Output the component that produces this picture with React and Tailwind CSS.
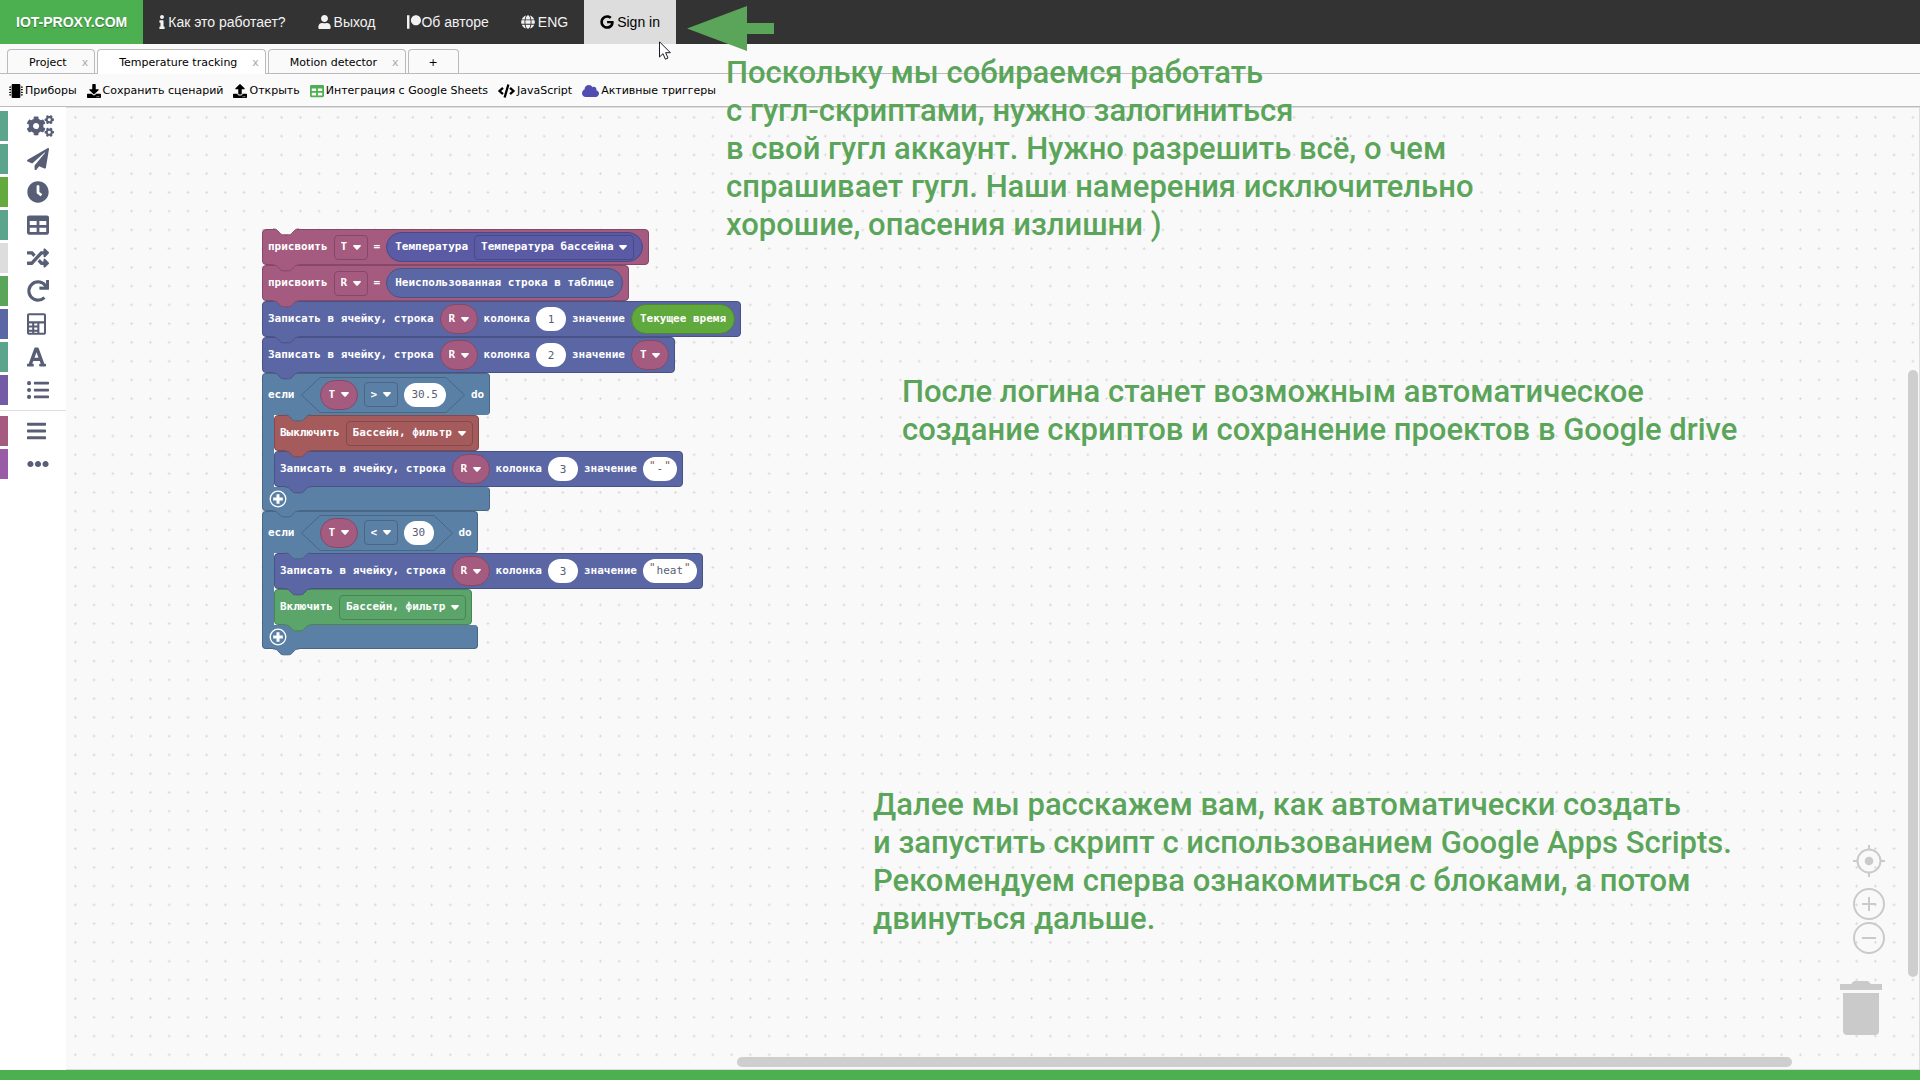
import React from "react";
import {
  FaInfo, FaUser, FaPatreon, FaGlobe, FaGoogle, FaMicrochip, FaDownload, FaUpload, FaTable, FaCode, FaCloud,
  FaCogs, FaPaperPlane, FaClock, FaRandom, FaRedo, FaFont, FaListUl, FaBars, FaEllipsisH,
} from "react-icons/fa";

/* ---------- Navigation ---------- */

function NavLink({ icon, children, active, tight }) {
  return (
    <a
      href="#"
      className={
        "flex items-center px-4 " +
        (tight ? "" : "gap-[3px] ") +
        (active ? "bg-[#dddddd] text-black" : "text-[#f2f2f2]")
      }
    >
      {icon}
      <span>{children}</span>
    </a>
  );
}

function TopNav() {
  return (
    <nav className="flex h-11 shrink-0 bg-[#333333] font-['Liberation_Sans',Arial,sans-serif] text-sm leading-4">
      <a href="#" className="flex items-center bg-[#4caf50] px-4 font-bold text-white [text-shadow:0_1px_1px_rgba(0,0,0,0.35)]">
        IOT-PROXY.COM
      </a>
      <NavLink icon={<FaInfo className="h-3.5 w-1.5" />}>Как это работает?</NavLink>
      <NavLink icon={<FaUser className="h-3.5 w-[13px]" />}>Выход</NavLink>
      <NavLink tight icon={<FaPatreon className="size-3.5" />}>Об авторе</NavLink>
      <NavLink icon={<FaGlobe className="size-3.5" />}>ENG</NavLink>
      <NavLink active icon={<FaGoogle className="h-3.5 w-3.5" />}>Sign in</NavLink>
    </nav>
  );
}

/* ---------- Project tabs ---------- */

function Tab({ children, active }) {
  return (
    <div
      className={
        "flex items-center gap-[15px] rounded-t border border-b-0 border-[#bbbbbb] pt-0.5 pr-1.5 pl-[21px] " +
        (active ? "-mb-px bg-white pb-px" : "bg-[#fafafa]")
      }
    >
      <button type="button">{children}</button>
      <button type="button" aria-label={"Close " + children} className="text-[#aaaaaa]">x</button>
    </div>
  );
}

function Tabs() {
  return (
    <div className="flex h-[30px] shrink-0 gap-0.5 border-b border-[#bbbbbb] bg-[#fafafa] pt-[5px] pl-[7px] text-[11px] leading-4">
      <Tab>Project</Tab>
      <Tab active>Temperature tracking</Tab>
      <Tab>Motion detector</Tab>
      <button type="button" aria-label="New tab" className="rounded-t border border-b-0 border-[#bbbbbb] px-5 pt-0.5">
        +
      </button>
    </div>
  );
}

/* ---------- Toolbar ---------- */

const TOOLS = [
  { label: "Приборы", icon: <FaMicrochip className="size-3.5" /> },
  { label: "Сохранить сценарий", icon: <FaDownload className="size-3.5" /> },
  { label: "Открыть", icon: <FaUpload className="size-3.5" /> },
  { label: "Интеграция с Google Sheets", icon: <FaTable className="size-3.5 text-[#4caf50]" /> },
  { label: "JavaScript", icon: <FaCode className="h-3.5 w-[17px]" /> },
  { label: "Активные триггеры", icon: <FaCloud className="h-3.5 w-[17px] text-[#504cb0]" /> },
];

function Toolbar() {
  return (
    <div className="flex h-[33px] shrink-0 items-center gap-2.5 border-b border-[#bbbbbb] bg-[#fafafa] pt-px pl-[9px] text-[11px] leading-4">
      {TOOLS.map((t) => (
        <button key={t.label} type="button" className="flex items-center gap-0.5 whitespace-nowrap text-black">
          {t.icon}
          {t.label}
        </button>
      ))}
    </div>
  );
}

/* ---------- Toolbox ---------- */

function CalculatorIcon() {
  return (
    <svg viewBox="0 0 448 512" className="h-[22px] w-[19px]" fill="currentColor" fillRule="evenodd" aria-hidden="true">
      <path d="M48 0h352c27 0 48 21 48 48v416c0 27-21 48-48 48H48c-27 0-48-21-48-48V48C0 21 21 0 48 0zM48 48v144h352V48zM48 242v50h74v-50zM170 242v50h74v-50zM292 242v222h108V242zM48 340v50h74v-50zM170 340v50h74v-50zM48 436v28h74v-28zM170 436v28h74v-28z" />
    </svg>
  );
}

const CATEGORIES = [
  { name: "Приборы", bar: "bg-[#5ba58c]", icon: <FaCogs className="h-[22px] w-[27px]" /> },
  { name: "Сообщения", bar: "bg-[#5ba58c]", icon: <FaPaperPlane className="size-[22px]" /> },
  { name: "Время", bar: "bg-[#63a93e]", icon: <FaClock className="size-[22px]" /> },
  { name: "Таблицы", bar: "bg-[#5ba58c]", icon: <FaTable className="size-[22px]" /> },
  { name: "Логика", bar: "bg-[#dddddd]", icon: <FaRandom className="size-[22px]" /> },
  { name: "Циклы", bar: "bg-[#5ba55b]", icon: <FaRedo className="size-[22px]" /> },
  { name: "Математика", bar: "bg-[#5b67a5]", icon: <CalculatorIcon /> },
  { name: "Текст", bar: "bg-[#5ba58c]", icon: <FaFont className="h-[22px] w-[19px]" /> },
  { name: "Списки", bar: "bg-[#745ba5]", icon: <FaListUl className="size-[22px]" /> },
];

const EXTRA = [
  { name: "Переменные", bar: "bg-[#a55b80]", icon: <FaBars className="h-[22px] w-[19px]" /> },
  { name: "Функции", bar: "bg-[#995ba5]", icon: <FaEllipsisH className="size-[22px]" /> },
];

function Category({ name, bar, icon }) {
  return (
    <button type="button" aria-label={name} className="flex h-[30px] items-center gap-[19px] text-[#575e75]">
      <span className={"h-full w-2 " + bar} />
      {icon}
    </button>
  );
}

function Toolbox() {
  return (
    <aside className="w-[66px] shrink-0 bg-white pt-1">
      <div className="flex flex-col gap-[3px]">
        {CATEGORIES.map((c) => <Category key={c.name} {...c} />)}
      </div>
      <hr className="mt-[5px] mb-[5px] border-[#dddddd]" />
      <div className="flex flex-col gap-[3px]">
        {EXTRA.map((c) => <Category key={c.name} {...c} />)}
      </div>
    </aside>
  );
}

/* ---------- Blocks ---------- */

const TONES = {
  pink: { bg: "bg-[#a55b80]", line: "border-[#844966]", fill: "fill-[#a55b80]", stroke: "stroke-[#844966]" },
  violet: { bg: "bg-[#5b5ba5]", line: "border-[#494984]", fill: "fill-[#5b5ba5]", stroke: "stroke-[#494984]" },
  blue: { bg: "bg-[#5b67a5]", line: "border-[#495284]", fill: "fill-[#5b67a5]", stroke: "stroke-[#495284]" },
  steel: { bg: "bg-[#5b80a5]", line: "border-[#496684]", fill: "fill-[#5b80a5]", stroke: "stroke-[#496684]" },
  red: { bg: "bg-[#a55b5b]", line: "border-[#844949]", fill: "fill-[#a55b5b]", stroke: "stroke-[#844949]" },
  green: { bg: "bg-[#5ba56b]", line: "border-[#498455]", fill: "fill-[#5ba56b]", stroke: "stroke-[#498455]" },
  lime: { bg: "bg-[#60a93c]", line: "border-[#4d8730]", fill: "fill-[#60a93c]", stroke: "stroke-[#4d8730]" },
};

function Notch({ tone, className }) {
  return (
    <svg viewBox="0 0 26 8" className={"absolute z-10 h-2 w-[26px] " + className} aria-hidden="true">
      <path
        d="M0 0V1C2.500 1 3.500 1.500 4.500 2.500L7 5.200C8 6.300 9 6.800 10.500 6.800H15.500C17 6.800 18 6.300 19 5.200L21.500 2.500C22.500 1.500 23.500 1 26 1V0Z"
        className={tone ? TONES[tone].fill : "fill-[#f9f9f9]"}
      />
      <path
        d="M0 1C2.500 1 3.500 1.500 4.500 2.500L7 5.200C8 6.300 9 6.800 10.500 6.800H15.500C17 6.800 18 6.300 19 5.200L21.500 2.500C22.500 1.500 23.500 1 26 1"
        fill="none"
        className={tone ? TONES[tone].stroke : "stroke-[#844966]"}
      />
    </svg>
  );
}

function Block({ tone, first, children }) {
  const t = TONES[tone];
  return (
    <div className={"relative flex h-9 w-max items-center gap-1.5 rounded border px-[5px] " + t.bg + " " + t.line}>
      {first && <Notch className="-top-[2px] left-[10px]" />}
      {children}
      <Notch tone={tone} className="-bottom-[8px] left-[10px]" />
    </div>
  );
}

function Pill({ tone, children }) {
  const t = TONES[tone];
  return (
    <span className={"flex h-[30px] items-center gap-1.5 rounded-full border px-2 " + t.bg + " " + t.line}>{children}</span>
  );
}

function Caret() {
  return (
    <svg viewBox="0 0 8 5" className="pointer-events-none absolute right-0 h-[5px] w-2" aria-hidden="true">
      <path d="M.9 0H7.100C7.900 0 8.200.8 7.700 1.300L4.700 4.600C4.300 5 3.700 5 3.300 4.600L.3 1.300C-.2.8.1 0 .9 0Z" fill="white" />
    </svg>
  );
}

function Picker({ value, label }) {
  return (
    <span className="relative flex items-center">
      <select aria-label={label} className="appearance-none bg-transparent pr-[13px] font-bold text-white outline-none">
        <option>{value}</option>
      </select>
      <Caret />
    </span>
  );
}

function BoxPicker({ tone, ...rest }) {
  return (
    <span className={"flex h-[25px] items-center rounded border px-1.5 " + TONES[tone].line}>
      <Picker {...rest} />
    </span>
  );
}

function VarPill({ name }) {
  return (
    <Pill tone="pink">
      <Picker value={name} label={"Переменная " + name} />
    </Pill>
  );
}

function NumberField({ value, label }) {
  return (
    <input
      type="text"
      aria-label={label}
      defaultValue={value}
      className="field-sizing-content h-6 min-w-[30px] rounded-full bg-white px-2 text-center font-normal text-[#575e75]"
    />
  );
}

function TextField({ value }) {
  return (
    <span className="flex h-6 items-center gap-px rounded-full bg-white px-1.5 font-normal text-[#575e75]">
      <span className="pb-1.5 text-[#8a5a4a]">&quot;</span>
      <input type="text" aria-label="Значение" defaultValue={value} className="field-sizing-content" />
      <span className="pb-1.5 text-[#8a5a4a]">&quot;</span>
    </span>
  );
}

function AssignBlock({ name, first, children }) {
  return (
    <Block tone="pink" first={first}>
      <span>присвоить</span>
      <BoxPicker tone="pink" value={name} label="Переменная" />
      <span>=</span>
      {children}
    </Block>
  );
}

function WriteCell({ column, children }) {
  return (
    <Block tone="blue">
      <span>Записать в ячейку, строка</span>
      <VarPill name="R" />
      <span>колонка</span>
      <NumberField value={column} label="Колонка" />
      <span>значение</span>
      {children}
    </Block>
  );
}

function Condition({ op, value }) {
  return (
    <span className="flex h-9 items-stretch">
      <svg viewBox="0 0 19 36" className="h-9 w-[19px]" aria-hidden="true">
        <path d="M19 .5L.5 18L19 35.500" fill="none" className="stroke-[#496684]" />
      </svg>
      <span className="flex items-center gap-1.5 border-y border-[#496684]">
        <VarPill name="T" />
        <BoxPicker tone="steel" value={op} label="Сравнение" />
        <NumberField value={value} label="Порог" />
      </span>
      <svg viewBox="0 0 19 36" className="h-9 w-[19px]" aria-hidden="true">
        <path d="M0 .5L18.500 18L0 35.500" fill="none" className="stroke-[#496684]" />
      </svg>
    </span>
  );
}

function IfBlock({ op, value, children }) {
  return (
    <div className="relative flex w-max flex-col">
      <div className="flex h-[42px] items-center gap-1.5 rounded-t rounded-br border border-b-0 border-[#496684] bg-[#5b80a5] px-[5px]">
        <span>если</span>
        <Condition op={op} value={value} />
        <span>do</span>
      </div>
      <div className="flex w-0 min-w-full">
        <div className="w-3 shrink-0 border-l border-[#496684] bg-[#5b80a5]" />
        <div>
          <div className="relative">
            <Notch tone="steel" className="-top-px left-[11px]" />
          </div>
          {children}
        </div>
      </div>
      <div className="flex h-6 items-center rounded-tr rounded-b border border-t-0 border-[#496684] bg-[#5b80a5] px-1.5">
        <button type="button" aria-label="Добавить условие">
          <svg viewBox="0 0 18 18" className="size-[18px]" fill="none" stroke="white" aria-hidden="true">
            <circle cx="9" cy="9" r="7.800" strokeWidth="1.300" />
            <path d="M9 4.200V13.800M4.200 9H13.800" strokeWidth="3" />
          </svg>
        </button>
      </div>
      <Notch tone="steel" className="-bottom-[7px] left-[11px]" />
    </div>
  );
}

function Script() {
  return (
    <div className="absolute top-[121px] left-[196px] font-['DejaVu_Sans_Mono',monospace] text-[11px] leading-4 font-bold text-white">
      <AssignBlock name="T" first>
        <Pill tone="violet">
          <span>Температура</span>
          <BoxPicker tone="violet" value="Температура бассейна" label="Датчик" />
        </Pill>
      </AssignBlock>
      <AssignBlock name="R">
        <Pill tone="blue">Неиспользованная строка в таблице</Pill>
      </AssignBlock>
      <WriteCell column="1">
        <Pill tone="lime">Текущее время</Pill>
      </WriteCell>
      <WriteCell column="2">
        <VarPill name="T" />
      </WriteCell>
      <IfBlock op=">" value="30.5">
        <Block tone="red">
          <span>Выключить</span>
          <BoxPicker tone="red" value="Бассейн, фильтр" label="Прибор" />
        </Block>
        <WriteCell column="3">
          <TextField value="-" />
        </WriteCell>
      </IfBlock>
      <IfBlock op="<" value="30">
        <WriteCell column="3">
          <TextField value="heat" />
        </WriteCell>
        <Block tone="green">
          <span>Включить</span>
          <BoxPicker tone="green" value="Бассейн, фильтр" label="Прибор" />
        </Block>
      </IfBlock>
    </div>
  );
}

/* ---------- Workspace ---------- */

function Grid() {
  return (
    <svg className="absolute inset-0 size-full" aria-hidden="true">
      <defs>
        <pattern id="dots" width="18.750" height="18.750" patternUnits="userSpaceOnUse">
          <path d="M7.900 9.400H10.900M9.400 7.900V10.900" stroke="#d9d9d9" strokeWidth="0.900" />
        </pattern>
      </defs>
      <rect width="100%" height="100%" fill="url(#dots)" />
    </svg>
  );
}

function Controls() {
  return (
    <div className="absolute right-[34px] bottom-[34px] flex flex-col items-end text-[#cacaca]">
      <button type="button" aria-label="Center">
        <svg viewBox="0 0 32 32" className="size-8" fill="none" stroke="currentColor" strokeWidth="2" aria-hidden="true">
          <circle cx="16" cy="16" r="11.500" />
          <circle cx="16" cy="16" r="4.300" fill="currentColor" stroke="none" />
          <path d="M16 0V5M16 27V32M0 16H5M27 16H32" />
        </svg>
      </button>
      <button type="button" aria-label="Zoom in" className="mt-[11px]">
        <svg viewBox="0 0 32 32" className="size-8" fill="none" stroke="currentColor" strokeWidth="2" aria-hidden="true">
          <circle cx="16" cy="16" r="15" />
          <path d="M16 9V23M9 16H23" />
        </svg>
      </button>
      <button type="button" aria-label="Zoom out" className="mt-0.5">
        <svg viewBox="0 0 32 32" className="size-8" fill="none" stroke="currentColor" strokeWidth="2" aria-hidden="true">
          <circle cx="16" cy="16" r="15" />
          <path d="M9 16H23" />
        </svg>
      </button>
      <button type="button" aria-label="Trash" className="mt-[27px] mr-[3px]">
        <svg viewBox="0 0 42 54" className="h-[54px] w-[42px]" fill="currentColor" aria-hidden="true">
          <path d="M0 3H11L14 0H28L31 3H42V9H0Z" />
          <path d="M3 12H39V50C39 52.500 37.500 54 35 54H7C4.500 54 3 52.500 3 50Z" />
        </svg>
      </button>
    </div>
  );
}

function Workspace() {
  return (
    <main className="relative flex-1 overflow-hidden border-t border-r border-b border-[#dddddd] bg-[#f9f9f9]">
      <Grid />
      <Script />
      <Controls />
      <div className="absolute top-[262px] right-px bottom-[92px] w-2.5 rounded-full bg-[#cecece]" />
      <div className="absolute right-[127px] bottom-0.5 left-[671px] h-2.5 rounded-full bg-[#cecece]" />
    </main>
  );
}

/* ---------- Tutorial notes ---------- */

function Note({ lines, className }) {
  return (
    <p className={"absolute font-['Roboto',sans-serif] text-[31px] leading-[38px] font-medium whitespace-nowrap text-[#5ba55b] " + className}>
      {lines.map((l) => <span key={l} className="block">{l}</span>)}
    </p>
  );
}

function Tutorial() {
  return (
    <div className="pointer-events-none absolute inset-0">
      <svg viewBox="0 0 88 46" className="absolute top-[6px] left-[687px] h-[46px] w-[88px]" aria-hidden="true">
        <path d="M0 22.500L60 0V17H87V28H60V45Z" fill="#5ba55b" />
      </svg>
      <svg viewBox="0 0 12 19" className="absolute top-[41px] left-[659px] h-[19px] w-3" aria-hidden="true">
        <path d="M.5.8V16L4 12.700L6.400 18.200L9 17L6.600 11.700H11.400Z" fill="white" stroke="#1a1a2a" />
      </svg>
      <Note
        className="top-[54px] left-[726px]"
        lines={[
          "Поскольку мы собираемся работать",
          "с гугл-скриптами, нужно залогиниться",
          "в свой гугл аккаунт. Нужно разрешить всё, о чем",
          "спрашивает гугл. Наши намерения исключительно",
          "хорошие, опасения излишни )",
        ]}
      />
      <Note
        className="top-[373px] left-[902px]"
        lines={["После логина станет возможным автоматическое", "создание скриптов и сохранение проектов в Google drive"]}
      />
      <Note
        className="top-[786px] left-[873px]"
        lines={[
          "Далее мы расскажем вам, как автоматически создать",
          "и запустить скрипт с использованием Google Apps Scripts.",
          "Рекомендуем сперва ознакомиться с блоками, а потом",
          "двинуться дальше.",
        ]}
      />
    </div>
  );
}

export default function App() {
  return (
    <div className="relative flex h-screen min-h-[700px] flex-col overflow-hidden bg-white font-['DejaVu_Sans',Verdana,sans-serif] text-black">
      <TopNav />
      <Tabs />
      <Toolbar />
      <div className="flex min-h-0 flex-1">
        <Toolbox />
        <Workspace />
      </div>
      <footer className="h-2.5 shrink-0 bg-[#4caf50]" />
      <Tutorial />
    </div>
  );
}
